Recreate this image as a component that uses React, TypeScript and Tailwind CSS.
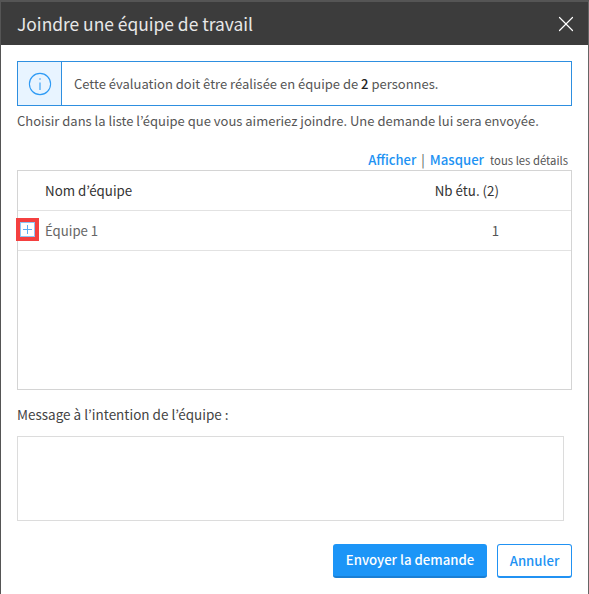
import { X } from "lucide-react";

export default function App() {
  return (
    <div className="w-[589px] h-[594px] bg-white border border-t-2 border-[#555555] border-r-[#666666] border-b-0 flex flex-col overflow-hidden font-['Noto_Sans_CJK_KR','Noto_Sans_CJK_JP',sans-serif] text-[#555555]">
      {/* Header */}
      <div className="h-[43px] shrink-0 bg-[#3c3c3c] flex items-center justify-between pl-[16px] pr-[9px]">
        <h1 className="text-[17.4px] font-normal text-[#e8e8e8] leading-none">Joindre une équipe de travail</h1>
        <X size={26} strokeWidth={1.1} className="text-white" />
      </div>

      <div className="flex flex-col flex-1 pl-[16px] pr-[16px]">
        {/* Info */}
        <div className="mt-[16px] h-[45px] flex border border-[#2e8fe0]">
          <div className="w-[44px] shrink-0 bg-[#e8f4ff] border-r border-[#2e8fe0] flex items-center justify-center">
            <svg width="24" height="24" viewBox="0 0 24 24" fill="none" stroke="#2f9bf5" strokeWidth="1.1">
              <circle cx="12" cy="12" r="10.6" />
              <path d="M12 10.5V18" />
              <path d="M12 6.2V7.8" />
            </svg>
          </div>
          <p className="pl-[12px] text-[13px] leading-[43px]">
            Cette évaluation doit être réalisée en équipe de <span className="font-medium text-[#222222]">2</span> personnes.
          </p>
        </div>
        <p className="mt-[4px] text-[13px] leading-[21px] whitespace-nowrap">
          Choisir dans la liste l’équipe que vous aimeriez joindre. Une demande lui sera envoyée.
        </p>

        {/* Show / hide */}
        <div className="mt-[19px] h-[20px] flex items-center justify-end pr-[4px] whitespace-nowrap">
          <span className="text-[13px] font-medium text-[#2192f3]">Afficher</span>
          <span className="mx-[5px] text-[13px] text-[#555555]">|</span>
          <span className="text-[13.2px] font-medium text-[#2192f3]">Masquer</span>
          <span className="ml-[6px] text-[11.3px]">tous les détails</span>
        </div>

        {/* Table */}
        <div className="h-[220px] border border-[#d4d4d4]">
          <div className="h-[40px] flex items-center border-b border-[#e2e2e2] pl-[27px] pr-[72px] justify-between text-[13.33px] text-[#333333]">
            <span>Nom d’équipe</span>
            <span>Nb étu. (2)</span>
          </div>
          <div className="h-[40px] flex items-center border-b border-[#e2e2e2] pr-[72px] text-[13.2px]">
            <div className="relative w-[27px] shrink-0 h-full">
              <div className="absolute left-[-2px] top-[7px] w-[23px] h-[23px] border-4 border-[#f44040] bg-white flex items-center justify-center">
                <div className="w-[15px] h-[15px] border border-[#8cc6f7] flex items-center justify-center">
                  <svg width="11" height="11" viewBox="0 0 11 11" fill="none" stroke="#5aaef5" strokeWidth="1">
                    <path d="M5.5 1V10M1 5.5H10" />
                  </svg>
                </div>
              </div>
            </div>
            <span className="text-[#666666]">Équipe 1</span>
            <span className="ml-auto">1</span>
          </div>
        </div>

        {/* Message */}
        <label className="mt-[14px] text-[13.5px] leading-[21px] text-[#444444]">Message à l’intention de l’équipe :</label>
        <textarea className="mt-[11px] w-[547px] h-[85px] border border-[#dcdcdc] resize-none outline-none" />

        {/* Actions */}
        <div className="mt-[23px] flex justify-end gap-[10px]">
          <button className="w-[154px] h-[34px] rounded-[3px] bg-[#1c95f7] border-b-2 border-[#1a7fd4] text-white text-[13.2px] font-medium">Envoyer la demande</button>
          <button className="w-[75px] h-[34px] rounded-[3px] bg-white border border-b-2 border-[#2192f3] text-[#2192f3] text-[13.2px] font-medium">Annuler</button>
        </div>
      </div>
    </div>
  );
}
